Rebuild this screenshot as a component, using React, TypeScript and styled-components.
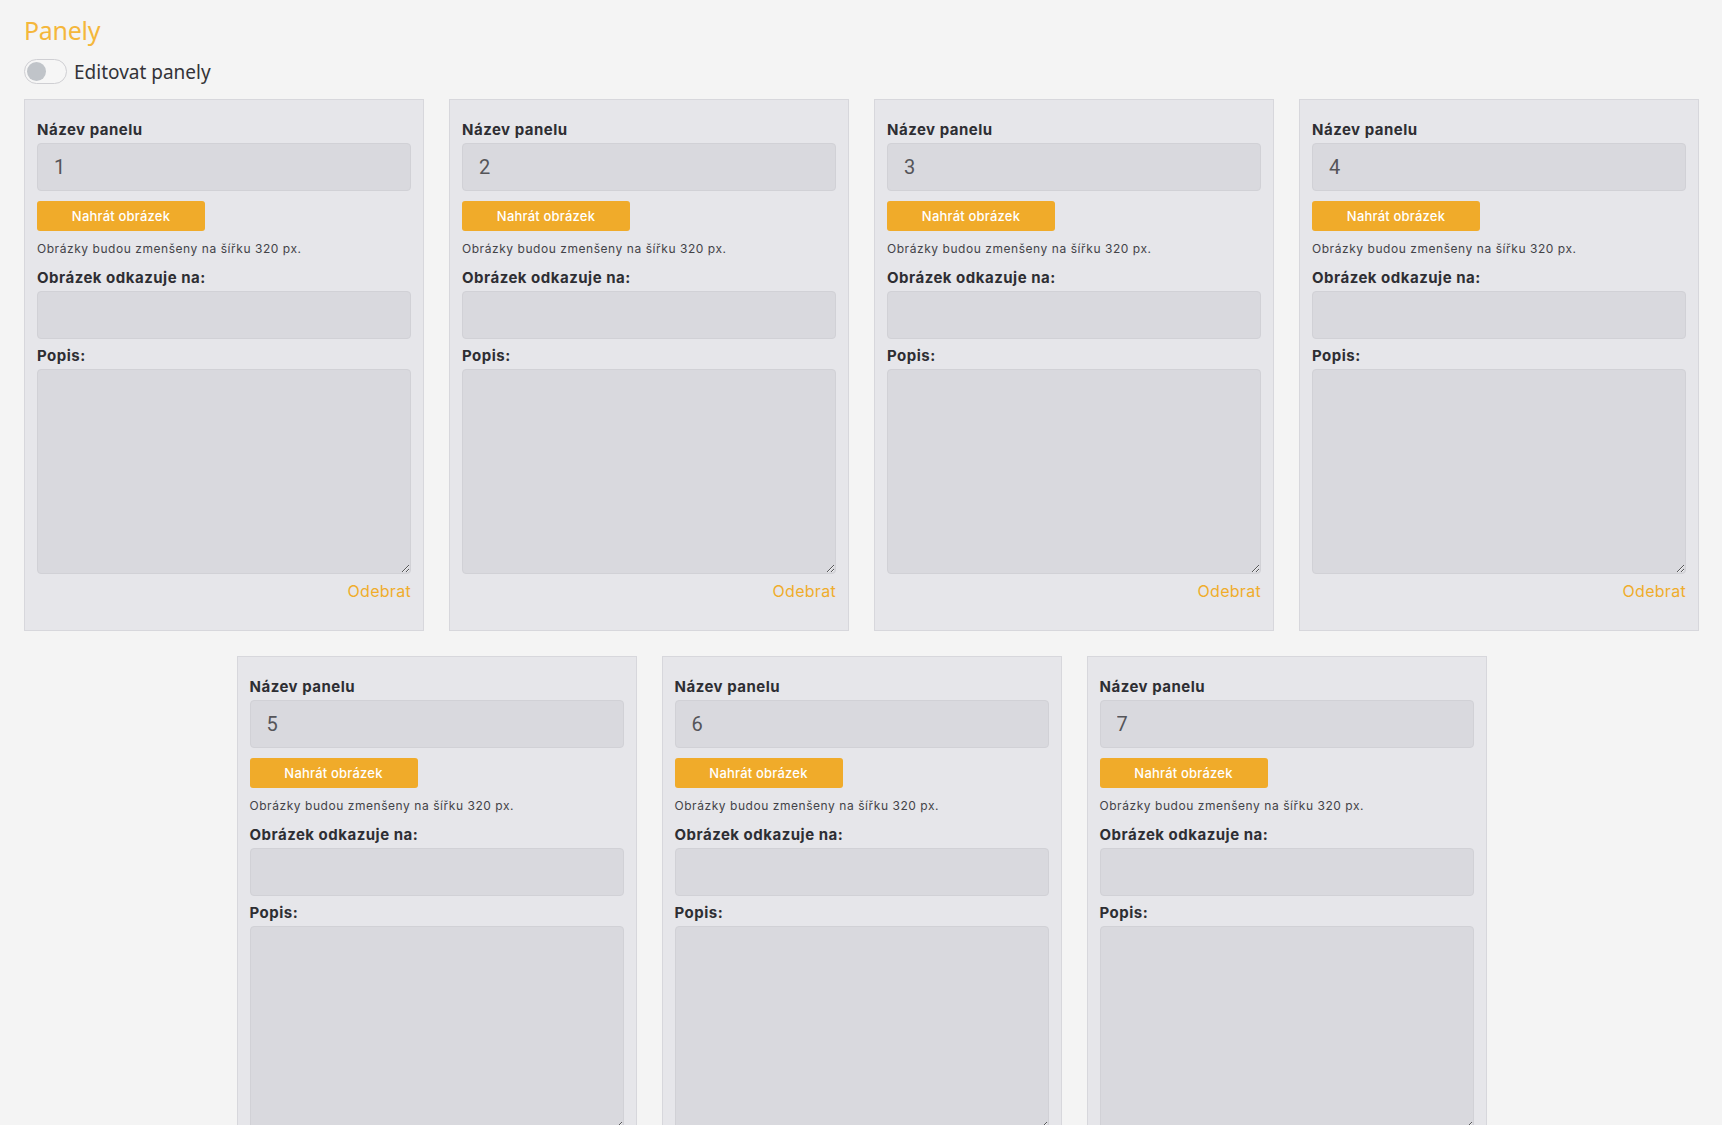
import React from "react";
import styled, { createGlobalStyle } from "styled-components";

const GlobalStyle = createGlobalStyle`
  html, body {
    margin: 0;
    padding: 0;
    background: #f4f4f4;
  }
  body {
    font-family: Inter, "Noto Sans", Arial, sans-serif;
    color: #2e2e33;
  }
  * { box-sizing: border-box; }
`;

const Page = styled.div`
  padding: 15px 23px 0 24px;
`;

const Title = styled.h1`
  margin: 0;
  font-family: "Noto Sans", Arial, sans-serif;
  font-weight: 400;
  font-size: 25px;
  line-height: 30px;
  color: #f4b73b;
  letter-spacing: -0.3px;
`;

const ToggleRow = styled.label`
  display: flex;
  align-items: center;
  gap: 7px;
  height: 25px;
  margin-top: 14px;
  font-family: "Noto Sans", Arial, sans-serif;
  font-size: 19px;
  line-height: 26px;
  color: #333338;
`;

const Switch = styled.span`
  position: relative;
  display: inline-block;
  width: 43px;
  height: 25px;
  border-radius: 13px;
  border: 1px solid #cfcfd3;
  background: #f6f6f6;
`;

const Knob = styled.span`
  position: absolute;
  left: 2px;
  top: 2px;
  width: 19px;
  height: 19px;
  border-radius: 50%;
  background: #c0c4c9;
`;

const Grid = styled.div`
  display: flex;
  flex-wrap: wrap;
  justify-content: center;
  gap: 25px;
  margin-top: 15px;
`;

const Card = styled.div`
  width: 400px;
  display: flex;
  flex-direction: column;
  background: #e6e6ea;
  border: 1px solid #d7d7dc;
  padding: 21px 12px 30px 12px;
`;

const Label = styled.div<{ $top?: number }>`
  margin-top: ${(p) => p.$top ?? 0}px;
  margin-bottom: 4px;
  font-weight: 700;
  font-size: 15px;
  line-height: 18px;
  letter-spacing: 0.5px;
  color: #2e2e33;
`;

const TextInput = styled.input`
  width: 100%;
  height: 48px;
  border: 1px solid #d1d1d6;
  border-radius: 4px;
  background: #d9d9de;
  padding: 0 16px;
  font-family: Roboto, Arial, sans-serif;
  font-size: 20px;
  color: #555559;
  outline: none;
`;

const UploadButton = styled.button`
  margin-top: 10px;
  width: 168px;
  height: 30px;
  border: none;
  border-radius: 3px;
  background: #f0ab2a;
  color: #ffffff;
  font-family: Inter, "Noto Sans", sans-serif;
  font-size: 13px;
  font-weight: 500;
  letter-spacing: 0.2px;
  cursor: pointer;
`;

const Hint = styled.div`
  margin-top: 10px;
  font-size: 12px;
  line-height: 16px;
  letter-spacing: 0.55px;
  color: #434348;
`;

const TextArea = styled.textarea`
  width: 100%;
  height: 205px;
  border: 1px solid #d1d1d6;
  border-radius: 4px;
  background: #d9d9de;
  resize: both;
  outline: none;
  font-family: Inter, sans-serif;
`;

const RemoveLink = styled.a`
  align-self: flex-end;
  margin-top: 8px;
  font-size: 16px;
  line-height: 18px;
  letter-spacing: 0.3px;
  color: #f0ad2c;
  text-decoration: none;
  cursor: pointer;
`;

const panels = ["1", "2", "3", "4", "5", "6", "7"];

function PanelCard({ name }: { name: string }) {
  return (
    <Card>
      <Label>Název panelu</Label>
      <TextInput defaultValue={name} />
      <UploadButton>Nahrát obrázek</UploadButton>
      <Hint>Obrázky budou zmenšeny na šířku 320 px.</Hint>
      <Label $top={12}>Obrázek odkazuje na:</Label>
      <TextInput />
      <Label $top={8}>Popis:</Label>
      <TextArea />
      <RemoveLink>Odebrat</RemoveLink>
    </Card>
  );
}

export default function App() {
  return (
    <Page>
      <GlobalStyle />
      <Title>Panely</Title>
      <ToggleRow>
        <Switch>
          <Knob />
        </Switch>
        Editovat panely
      </ToggleRow>
      <Grid>
        {panels.map((p) => (
          <PanelCard key={p} name={p} />
        ))}
      </Grid>
    </Page>
  );
}
